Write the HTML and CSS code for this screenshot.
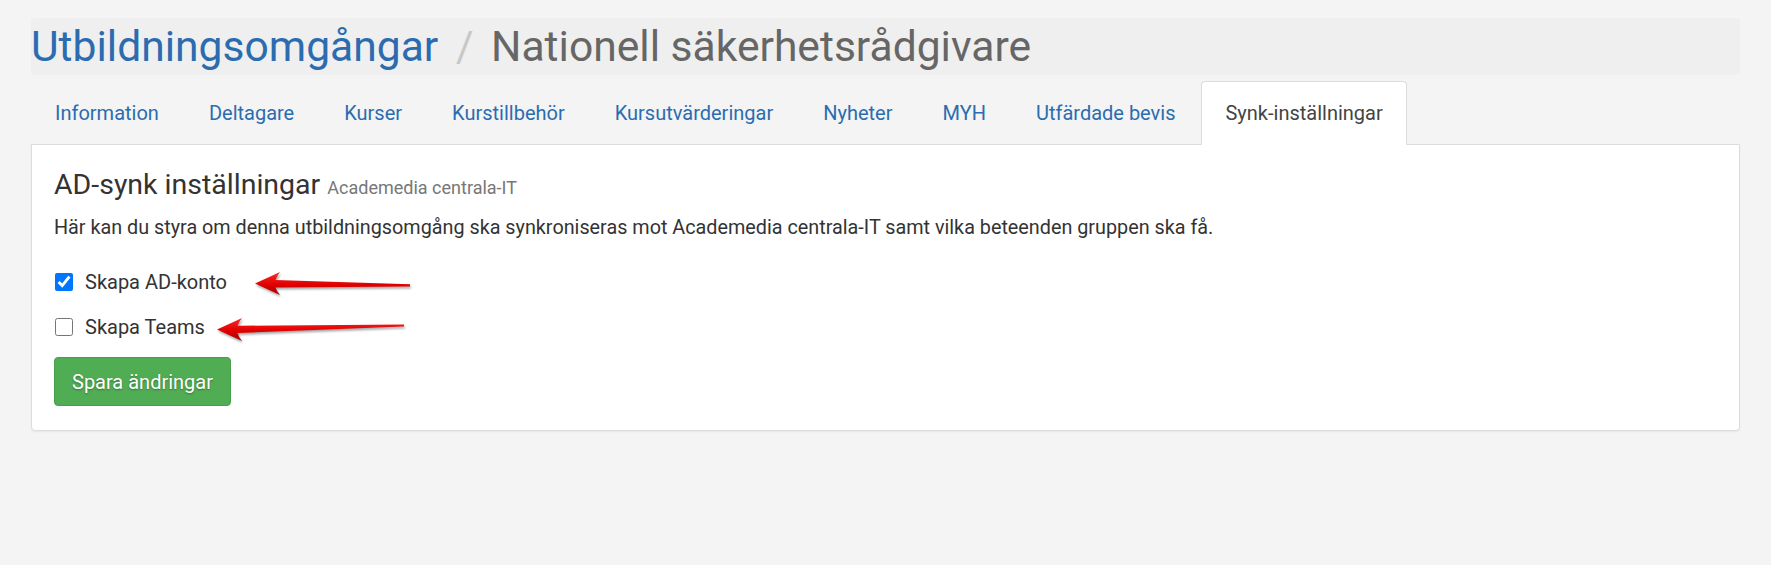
FILE: index.html
```html
<!DOCTYPE html>
<html lang="sv">
<head>
<meta charset="utf-8">
<title>Synk-inställningar</title>
<link rel="stylesheet" href="styles.css">
</head>
<body>
<div class="page">
  <h1 class="crumbs">
    <a class="crumb-link" href="#">Utbildningsomgångar</a>
    <span class="crumb-sep">/</span>
    <span class="crumb-current">Nationell säkerhetsrådgivare</span>
  </h1>

  <ul class="tabs">
    <li class="tab"><a href="#">Information</a></li>
    <li class="tab"><a href="#">Deltagare</a></li>
    <li class="tab"><a href="#">Kurser</a></li>
    <li class="tab"><a href="#">Kurstillbehör</a></li>
    <li class="tab"><a href="#">Kursutvärderingar</a></li>
    <li class="tab"><a href="#">Nyheter</a></li>
    <li class="tab"><a href="#">MYH</a></li>
    <li class="tab"><a href="#">Utfärdade bevis</a></li>
    <li class="tab tab-active"><a href="#">Synk-inställningar</a></li>
  </ul>

  <div class="panel">
    <h3 class="panel-title">AD-synk inställningar <small class="panel-sub">Academedia centrala-IT</small></h3>
    <p class="panel-text">Här kan du styra om denna utbildningsomgång ska synkroniseras mot Academedia centrala-IT samt vilka beteenden gruppen ska få.</p>
    <label class="check-row"><input type="checkbox" class="check" checked> <span>Skapa AD-konto</span></label>
    <label class="check-row"><input type="checkbox" class="check"> <span>Skapa Teams</span></label>
    <div class="actions"><button class="btn-save" type="button">Spara ändringar</button></div>

    <svg class="arrows" width="420" height="220" viewBox="0 0 420 220" aria-hidden="true">
      <defs>
        <linearGradient id="red" x1="0" y1="0" x2="0" y2="1">
          <stop offset="0" stop-color="#ff2a2a"/>
          <stop offset="0.55" stop-color="#e00000"/>
          <stop offset="1" stop-color="#a80000"/>
        </linearGradient>
      </defs>
      <path d="M223,138.5 L248,127 Q244.5,131.5 243.5,135 L378,139.2 L378,141.4 L243.5,142.4 Q244.5,146 248,150 Z" fill="url(#red)"/>
      <path d="M185,184.5 L210,173 Q206.5,177.5 205.5,180.8 L372,179.4 L372,181.6 L205.5,188 Q206.5,192 210,196 Z" fill="url(#red)"/>
    </svg>
  </div>
</div>
</body>
</html>
```

FILE: styles.css
```css
* { box-sizing: border-box; }

html, body {
  margin: 0;
  padding: 0;
  background: #f4f4f4;
}

body {
  font-family: Roboto, "Noto Sans", "Liberation Sans", sans-serif;
  color: #333;
  font-size: 20px;
}

.page {
  padding: 18px 31px 40px;
}

.crumbs {
  margin: 0;
  height: 57px;
  line-height: 57px;
  font-size: 42.6px;
  font-weight: 400;
  background: #efefef;
  border-radius: 4px;
  white-space: nowrap;
}

.crumb-link {
  color: #2b6cb0;
  text-decoration: none;
}

.crumb-sep {
  color: #c8c8c8;
  margin: 0 7px;
}

.crumb-current {
  color: #666;
}

.tabs {
  list-style: none;
  margin: 6px 0 0;
  padding: 0;
  display: flex;
  position: relative;
  z-index: 1;
}

.tab {
  margin-right: 2px;
  margin-bottom: -1px;
}

.tab a {
  display: block;
  padding: 18px 23px;
  line-height: 26px;
  font-size: 20px;
  color: #2b6cb0;
  text-decoration: none;
  border: 1px solid transparent;
  border-radius: 4px 4px 0 0;
}

.tab-active a {
  color: #444;
  background: #fff;
  border-color: #dcdcdc;
  border-bottom-color: #fff;
}

.panel {
  position: relative;
  background: #fff;
  border: 1px solid #dcdcdc;
  border-radius: 0 0 4px 4px;
  box-shadow: 0 1px 2px rgba(0,0,0,0.06);
  padding: 20px 22px 24px;
}

.panel-title {
  margin: 0;
  font-size: 28.5px;
  line-height: 40px;
  font-weight: 400;
  color: #333;
}

.panel-sub {
  font-size: 18px;
  color: #777;
}

.panel-text {
  margin: 7px 0 26px;
  line-height: 26px;
  font-size: 19.8px;
}

.check-row {
  display: flex;
  align-items: center;
  height: 30px;
  margin-bottom: 15px;
  font-size: 20px;
  color: #333;
}

.check {
  width: 18px;
  height: 18px;
  margin: 0 12px 0 1px;
}

.actions {
  display: flex;
}

.btn-save {
  height: 49px;
  padding: 0 17px;
  font-family: inherit;
  font-size: 20px;
  color: #fff;
  background: #51ad53;
  border: 1px solid #47a049;
  border-radius: 4px;
  text-shadow: 0 1px 2px rgba(0,0,0,0.35);
}

.arrows {
  position: absolute;
  left: 0;
  top: 0;
  pointer-events: none;
  filter: drop-shadow(1px 2px 1px rgba(0,0,0,0.35));
}
```
